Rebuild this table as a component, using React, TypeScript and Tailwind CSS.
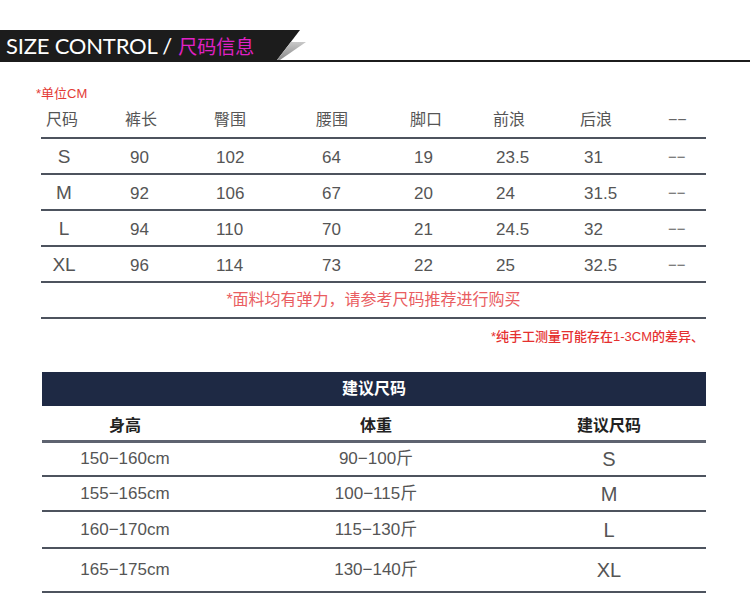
const measure = [
  { size: "S", vals: ["90", "102", "64", "19", "23.5", "31"] },
  { size: "M", vals: ["92", "106", "67", "20", "24", "31.5"] },
  { size: "L", vals: ["94", "110", "70", "21", "24.5", "32"] },
  { size: "XL", vals: ["96", "114", "73", "22", "25", "32.5"] },
]

const heads = ["裤长", "臀围", "腰围", "脚口", "前浪", "后浪"]
// small per-column nudges so numbers sit like the original
const valPad = ["pl-[5px]", "pl-[2px]", "pl-[6px]", "pl-[4px]", "pl-[3px]", "pl-[4px]"]

const advice = [
  { h: "150−160cm", w: "90−100斤", s: "S", rowH: "h-[32px]" },
  { h: "155−165cm", w: "100−115斤", s: "M", rowH: "h-[33px]" },
  { h: "160−170cm", w: "115−130斤", s: "L", rowH: "h-[35px]" },
  { h: "165−175cm", w: "130−140斤", s: "XL", rowH: "h-[42px]" },
]

const gridCols = "grid grid-cols-[84px_89px_102px_94px_83px_87px_88px_1fr]"
const advCols = "grid grid-cols-[166px_336px_130px_1fr]"

function Banner() {
  return (
    <div className="pt-[30px]">
      <div className="relative h-[30px]">
        <div className="h-full w-[300px] bg-[#1c1c1c] [clip-path:polygon(0_0,100%_0,277px_100%,0_100%)] flex items-center pl-[6px] pt-[1px]">
          <span className="font-['Lato','Open_Sans',sans-serif] text-[22px] leading-none text-white tracking-[-0.2px]">
            SIZE CONTROL /
          </span>
          <span className="ml-[6px] font-['Noto_Sans_CJK_SC',sans-serif] text-[19px] leading-none text-[#e021c6]">
            尺码信息
          </span>
        </div>
        <svg className="absolute left-[276px] top-[12px]" width="32" height="19" viewBox="0 0 32 19">
          <defs>
            <linearGradient id="wedge" x1="0" y1="0" x2="0" y2="1">
              <stop offset="0" stopColor="#c8c8c8" />
              <stop offset="1" stopColor="#8a8a8a" />
            </linearGradient>
          </defs>
          <polygon points="15,0 30,0 4,18 1,18" fill="url(#wedge)" />
        </svg>
      </div>
      <div className="h-[2px] bg-[#1c1c1c]" />
    </div>
  )
}

function MeasureTable() {
  return (
    <div className="ml-[41px] w-[665px]">
      <div className={`${gridCols} h-[37px] pt-[1px] items-center border-b-2 border-[#4d535e] text-[16px] text-[#555]`}>
        <div className="pl-[5px]">尺码</div>
        {heads.map((h) => (
          <div key={h}>{h}</div>
        ))}
        <div className="text-[#666]">−−</div>
      </div>
      {measure.map((r) => (
        <div
          key={r.size}
          className={`${gridCols} h-[36px] pt-[3px] items-center border-b-2 border-[#4d535e] text-[17px] text-[#555]`}
        >
          <div className="w-[46px] text-center text-[19px]">{r.size}</div>
          {r.vals.map((v, i) => (
            <div key={i} className={valPad[i]}>
              {v}
            </div>
          ))}
          <div className="text-[15px] text-[#666]">−−</div>
        </div>
      ))}
      <div className="h-[36px] flex items-center justify-center border-b-2 border-[#4d535e] text-[16px] text-[#e95d61]">
        *面料均有弹力，请参考尺码推荐进行购买
      </div>
      <div className="mt-[10px] h-[16px] leading-[16px] text-right pr-[2px] text-[13px] font-medium text-[#e5302f]">
        *纯手工测量可能存在1-3CM的差异、
      </div>
    </div>
  )
}

function AdviceTable() {
  return (
    <div className="ml-[42px] mt-[27px] w-[664px]">
      <div className="h-[34px] bg-[#1e2944] flex items-center justify-center text-white text-[16px] font-bold">
        建议尺码
      </div>
      <div className={`${advCols} h-[37px] pt-[6px] items-center border-b-[3px] border-[#5e6370] text-[16px] font-bold text-[#222]`}>
        <div className="text-center">身高</div>
        <div className="text-center">体重</div>
        <div className="text-center">建议尺码</div>
      </div>
      {advice.map((r) => (
        <div
          key={r.s}
          className={`${advCols} ${r.rowH} box-content items-center border-b-2 border-[#4d535e] text-[17px] text-[#555]`}
        >
          <div className="text-center">{r.h}</div>
          <div className="text-center">{r.w}</div>
          <div className="text-center text-[20px]">{r.s}</div>
        </div>
      ))}
    </div>
  )
}

export default function App() {
  return (
    <div className="w-[750px] h-[604px] bg-white overflow-hidden font-['Liberation_Sans','Noto_Sans_CJK_SC',sans-serif]">
      <Banner />
      <div className="ml-[36px] mt-[24px] h-[16px] leading-[16px] text-[13px] text-[#e33b36]">*单位CM</div>
      <MeasureTable />
      <AdviceTable />
    </div>
  )
}
